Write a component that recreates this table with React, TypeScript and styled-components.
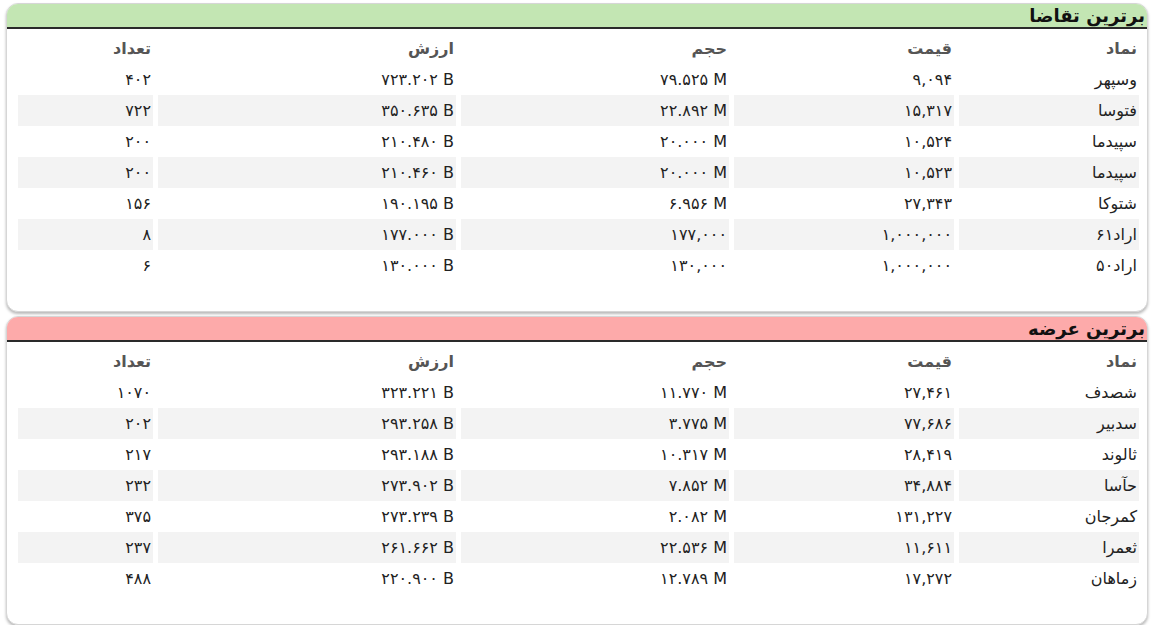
import React from "react";
import styled, { createGlobalStyle } from "styled-components";

const Global = createGlobalStyle`
  html, body { margin: 0; padding: 0; background: #ffffff; }
  body { font-family: "DejaVu Sans", "Noto Sans", sans-serif; }
`;

const Page = styled.div`
  display: flex;
  flex-direction: column;
  gap: 4px;
  padding: 3px 8px 0 6px;
`;

const Card = styled.section`
  direction: rtl;
  background: #fff;
  border: 1px solid #d6d6d6;
  border-radius: 12px;
  box-shadow: 0 2px 3px rgba(0, 0, 0, 0.28);
  overflow: hidden;
  padding-bottom: 30px;
`;

const Header = styled.div<{ $tone: string }>`
  background: ${(p) => p.$tone};
  border-bottom: 2px solid #2a2a2a;
  height: 23px;
  display: flex;
  align-items: center;
  padding: 0 2px;
  font-size: 18px;
  font-weight: bold;
  color: #111;
`;

const Table = styled.table`
  width: 1131px;
  margin: 4px 3px 0 5px;
  border-collapse: separate;
  border-spacing: 5px 0;
  table-layout: fixed;
`;

const Col = styled.col<{ $w: number }>`
  width: ${(p) => p.$w}px;
`;

const Th = styled.th`
  box-sizing: border-box;
  text-align: right;
  font-size: 16px;
  font-weight: bold;
  color: #555;
  height: 31px;
  padding: 0 2px;
`;

const Row = styled.tr<{ $shade: boolean }>`
  & > td {
    background: ${(p) => (p.$shade ? "#f3f3f3" : "#fff")};
  }
`;

const Td = styled.td`
  box-sizing: border-box;
  text-align: right;
  font-size: 16px;
  color: #222;
  height: 31px;
  padding: 0 2px;
  white-space: nowrap;
`;

const Ltr = styled.span`
  direction: ltr;
  unicode-bidi: isolate;
`;

type R = [string, string, string, string, string];

const cols: [string, number][] = [
  ["نماد", 180],
  ["قیمت", 220],
  ["حجم", 268],
  ["ارزش", 298],
  ["تعداد", 135],
];

const demand: R[] = [
  ["وسپهر", "۹,۰۹۴", "۷۹.۵۲۵ M", "۷۲۳.۲۰۲ B", "۴۰۲"],
  ["فتوسا", "۱۵,۳۱۷", "۲۲.۸۹۲ M", "۳۵۰.۶۳۵ B", "۷۲۲"],
  ["سپیدما", "۱۰,۵۲۴", "۲۰.۰۰۰ M", "۲۱۰.۴۸۰ B", "۲۰۰"],
  ["سپیدما", "۱۰,۵۲۳", "۲۰.۰۰۰ M", "۲۱۰.۴۶۰ B", "۲۰۰"],
  ["شتوکا", "۲۷,۳۴۳", "۶.۹۵۶ M", "۱۹۰.۱۹۵ B", "۱۵۶"],
  ["اراد۶۱", "۱,۰۰۰,۰۰۰", "۱۷۷,۰۰۰", "۱۷۷.۰۰۰ B", "۸"],
  ["اراد۵۰", "۱,۰۰۰,۰۰۰", "۱۳۰,۰۰۰", "۱۳۰.۰۰۰ B", "۶"],
];

const supply: R[] = [
  ["شصدف", "۲۷,۴۶۱", "۱۱.۷۷۰ M", "۳۲۳.۲۲۱ B", "۱۰۷۰"],
  ["سدبیر", "۷۷,۶۸۶", "۳.۷۷۵ M", "۲۹۳.۲۵۸ B", "۲۰۲"],
  ["ثالوند", "۲۸,۴۱۹", "۱۰.۳۱۷ M", "۲۹۳.۱۸۸ B", "۲۱۷"],
  ["حآسا", "۳۴,۸۸۴", "۷.۸۵۲ M", "۲۷۳.۹۰۲ B", "۲۳۲"],
  ["کمرجان", "۱۳۱,۲۲۷", "۲.۰۸۲ M", "۲۷۳.۲۳۹ B", "۳۷۵"],
  ["ثعمرا", "۱۱,۶۱۱", "۲۲.۵۳۶ M", "۲۶۱.۶۶۲ B", "۲۳۷"],
  ["زماهان", "۱۷,۲۷۲", "۱۲.۷۸۹ M", "۲۲۰.۹۰۰ B", "۴۸۸"],
];

const Panel: React.FC<{ title: string; tone: string; rows: R[] }> = ({ title, tone, rows }) => (
  <Card>
    <Header $tone={tone}>{title}</Header>
    <Table>
      <colgroup>
        {cols.map(([c, w]) => (
          <Col key={c} $w={w} />
        ))}
      </colgroup>
      <thead>
        <tr>
          {cols.map(([c]) => (
            <Th key={c}>{c}</Th>
          ))}
        </tr>
      </thead>
      <tbody>
        {rows.map((r, i) => (
          <Row key={i} $shade={i % 2 === 1}>
            <Td>{r[0]}</Td>
            <Td>{r[1]}</Td>
            <Td><Ltr>{r[2]}</Ltr></Td>
            <Td><Ltr>{r[3]}</Ltr></Td>
            <Td>{r[4]}</Td>
          </Row>
        ))}
      </tbody>
    </Table>
  </Card>
);

export default function App() {
  return (
    <Page>
      <Global />
      <Panel title="برترین تقاضا" tone="#c3e6b3" rows={demand} />
      <Panel title="برترین عرضه" tone="#fdaaaa" rows={supply} />
    </Page>
  );
}
